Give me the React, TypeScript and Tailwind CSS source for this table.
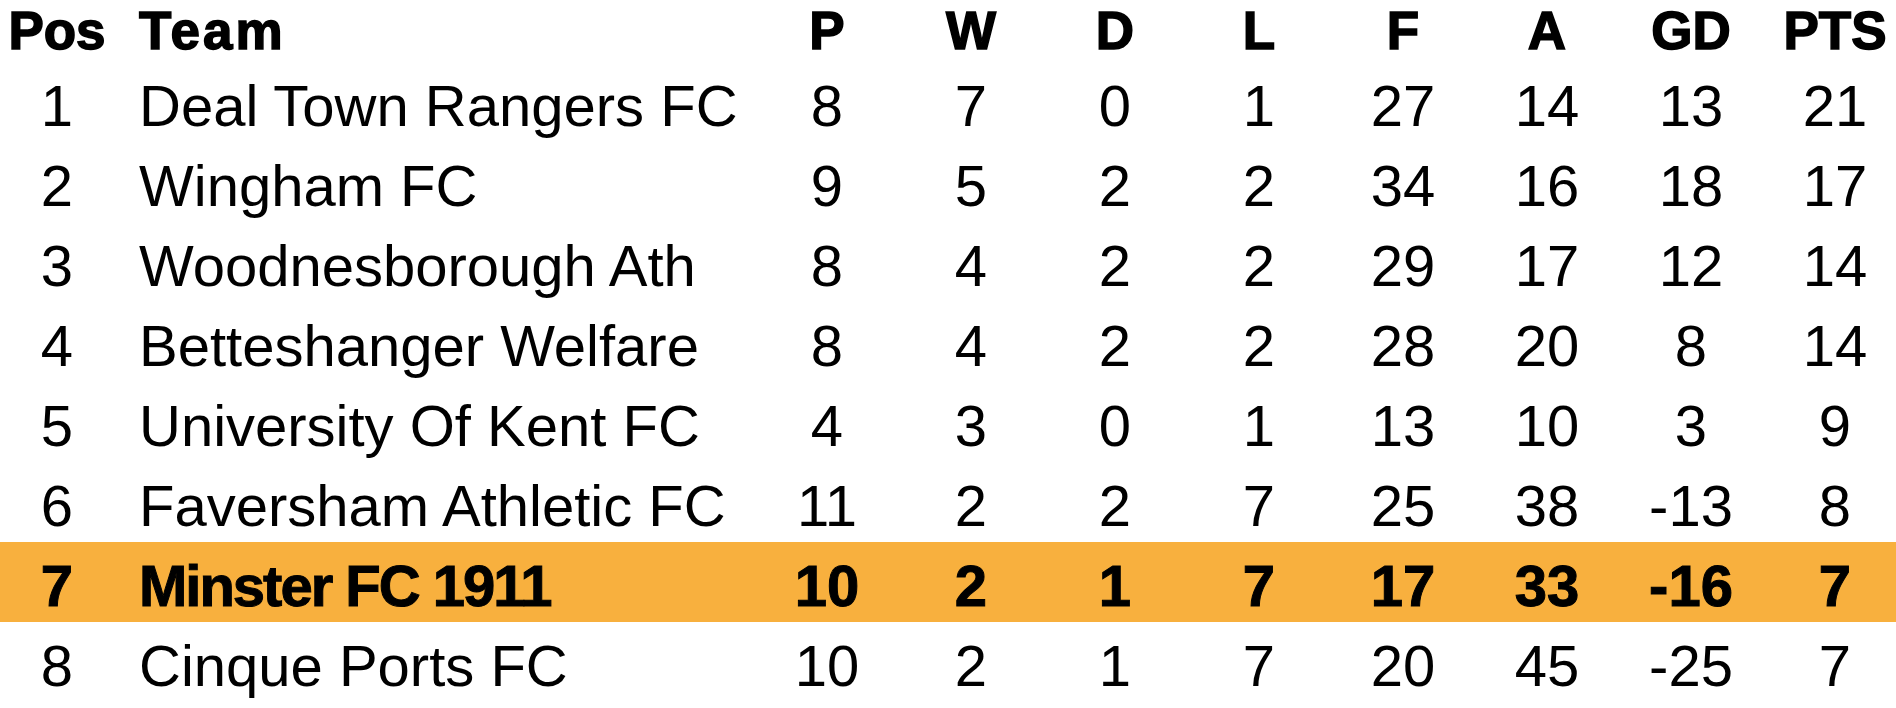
import React from 'react';

interface Row {
  pos: number;
  team: string;
  p: number;
  w: number;
  d: number;
  l: number;
  f: number;
  a: number;
  gd: number;
  pts: number;
  highlight?: boolean;
}

const rows: Row[] = [
  { pos: 1, team: 'Deal Town Rangers FC', p: 8, w: 7, d: 0, l: 1, f: 27, a: 14, gd: 13, pts: 21 },
  { pos: 2, team: 'Wingham FC', p: 9, w: 5, d: 2, l: 2, f: 34, a: 16, gd: 18, pts: 17 },
  { pos: 3, team: 'Woodnesborough Ath', p: 8, w: 4, d: 2, l: 2, f: 29, a: 17, gd: 12, pts: 14 },
  { pos: 4, team: 'Betteshanger Welfare', p: 8, w: 4, d: 2, l: 2, f: 28, a: 20, gd: 8, pts: 14 },
  { pos: 5, team: 'University Of Kent FC', p: 4, w: 3, d: 0, l: 1, f: 13, a: 10, gd: 3, pts: 9 },
  { pos: 6, team: 'Faversham Athletic FC', p: 11, w: 2, d: 2, l: 7, f: 25, a: 38, gd: -13, pts: 8 },
  { pos: 7, team: 'Minster FC 1911', p: 10, w: 2, d: 1, l: 7, f: 17, a: 33, gd: -16, pts: 7, highlight: true },
  { pos: 8, team: 'Cinque Ports FC', p: 10, w: 2, d: 1, l: 7, f: 20, a: 45, gd: -25, pts: 7 },
];

const heads = ['P', 'W', 'D', 'L', 'F', 'A', 'GD', 'PTS'];

// same column widths for header and body
const grid = 'grid grid-cols-[114px_641px_repeat(7,144px)_133px]';

export default function App() {
  return (
    <div
      className="w-[1896px] h-[708px] overflow-hidden bg-white text-black"
      style={{ fontFamily: '"Liberation Sans", Arial, sans-serif' }}
    >
      {/* header */}
      <div className={`${grid} h-[62px] text-[53px] font-bold leading-[62px] [-webkit-text-stroke:1.5px_black]`}>
        <div className="text-center">Pos</div>
        <div className="pl-[25px] tracking-[3px]">Team</div>
        {heads.map((h, i) => (
          <div key={h} className={`text-center ${i === 7 ? 'pl-[11px]' : ''}`}>
            {h}
          </div>
        ))}
      </div>

      {rows.map((r) => {
        const vals = [r.p, r.w, r.d, r.l, r.f, r.a, r.gd, r.pts];
        return (
          <div
            key={r.pos}
            className={`${grid} h-[80px] pt-[8px] text-[58px] leading-[72px] ${
              r.highlight ? 'bg-[#f8b03e] font-bold [-webkit-text-stroke:1px_black]' : ''
            }`}
          >
            <div className="text-center">{r.pos}</div>
            <div className={`pl-[25px] whitespace-nowrap ${r.highlight ? 'tracking-[-2px]' : ''}`}>
              {r.team}
            </div>
            {vals.map((v, i) => (
              <div key={i} className={`text-center ${i === 7 ? 'pl-[11px]' : ''}`}>
                {v}
              </div>
            ))}
          </div>
        );
      })}
    </div>
  );
}
